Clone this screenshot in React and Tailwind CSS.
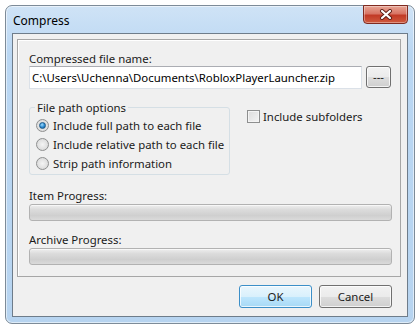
import React from "react";

function Radio({ checked, label }) {
  return (
    <div className="flex h-[19px] items-center whitespace-nowrap">
      <span
        className={
          "ml-[1px] flex h-[13px] w-[13px] shrink-0 items-center justify-center rounded-full border border-[#8e8f8f] " +
          "bg-[radial-gradient(circle_at_50%_50%,#f4f4f4_0%,#e0e0e0_60%,#cfcfcf_100%)]"
        }
      >
        {checked && (
          <span className="h-[7px] w-[7px] rounded-full border border-[#1d5a8a] bg-[radial-gradient(circle_at_40%_35%,#9fdcff_0%,#2b8ad0_55%,#0e4f8c_100%)]" />
        )}
      </span>
      <span className="ml-[4px] leading-[15px] text-[#1b1b1b]">{label}</span>
    </div>
  );
}

function ProgressBar() {
  return (
    <div className="mt-[1px] h-[17px] w-[363px] rounded-[3px] border border-[#b2b2b2] bg-[linear-gradient(to_bottom,#efefef_0%,#dcdcdc_30%,#cfcfcf_70%,#dadada_100%)] shadow-[inset_0_1px_0_#f7f7f7]" />
  );
}

function Button({ children, primary }) {
  return (
    <button
      type="button"
      className={
        "h-[23px] w-[73px] rounded-[3px] border leading-[15px] text-[#1b1b1b] shadow-[inset_0_0_0_1px_rgba(255,255,255,0.75)] " +
        (primary
          ? "border-[#3c8fc8] bg-[linear-gradient(to_bottom,#eaf6fd_0%,#d9f0fc_50%,#bee6fd_51%,#a7d9f5_100%)]"
          : "border-[#707070] bg-[linear-gradient(to_bottom,#f2f2f2_0%,#ebebeb_50%,#dddddd_51%,#cfcfcf_100%)]")
      }
    >
      {children}
    </button>
  );
}

export default function App() {
  return (
    <div className="h-[329px] w-[420px] bg-white p-[5px] font-['Noto_Sans','Open_Sans',sans-serif] text-[11.4px]">
      <div className="flex h-[319px] w-[410px] flex-col rounded-[7px] border border-[#7d8b98] bg-[linear-gradient(to_bottom,#cfe3f6_0%,#bad7f3_15%,#b7d4f0_100%)] shadow-[inset_0_0_0_1px_rgba(255,255,255,0.55)]">
        {/* title bar */}
        <div className="flex h-[27px] items-start pl-[7px] pr-[6px]">
          <span className="pt-[7px] text-[12px] leading-[15px] text-black">Compress</span>
          <div className="-mt-px ml-auto flex h-[19px] w-[45px] items-center justify-center rounded-b-[4px] border border-[#7f2a20] bg-[linear-gradient(to_bottom,#e8a594_0%,#d87464_45%,#c23a26_55%,#cf5a3e_100%)] shadow-[inset_0_0_0_1px_rgba(255,255,255,0.35)]">
            <svg width="14" height="11" viewBox="0 0 14 11">
              <path d="M3 2 L11 9 M11 2 L3 9" stroke="#5a1e16" strokeWidth="4" strokeLinecap="round" />
              <path d="M3 2 L11 9 M11 2 L3 9" stroke="#ffffff" strokeWidth="2.2" strokeLinecap="round" />
            </svg>
          </div>
        </div>

        {/* client area */}
        <div className="mx-[6px] flex h-[284px] flex-col border border-[#6e7c8a] bg-[#f0f0f0]">
          <div className="ml-[4px] mt-[5px] h-[238px] w-[384px] border border-[#a6a6a6] pl-[11px] shadow-[inset_1px_1px_0_#ffffff]">
            <div className="pt-[12px] leading-[14px] text-[#1b1b1b]">Compressed file name:</div>
            <div className="flex items-start">
              <div className="flex h-[23px] w-[333px] items-center whitespace-nowrap border border-[#dbe1e8] border-t-[#abadb3] bg-white pl-[2px] text-black">
                C:\Users\Uchenna\Documents\RobloxPlayerLauncher.zip
              </div>
              <button
                type="button"
                className="ml-[4px] flex h-[22px] w-[25px] items-center justify-center rounded-[3px] border border-[#707070] bg-[linear-gradient(to_bottom,#f2f2f2_0%,#ebebeb_50%,#dddddd_51%,#cfcfcf_100%)] leading-none text-[#1b1b1b] shadow-[inset_0_0_0_1px_rgba(255,255,255,0.75)]"
              >
                ---
              </button>
            </div>

            <div className="mt-[11px] flex items-start">
              <fieldset className="w-[201px] rounded-[3px] border border-[#d5dfe5] pb-[1px] pl-[5px] pt-[1px]">
                <legend className="px-[2px] leading-[15px] text-[#1b1b1b]">File path options</legend>
                <Radio checked label="Include full path to each file" />
                <Radio label="Include relative path to each file" />
                <Radio label="Strip path information" />
              </fieldset>
              <div className="ml-[17px] mt-[9px] flex h-[15px] items-center whitespace-nowrap">
                <span className="h-[13px] w-[13px] border border-[#8e8f8f] bg-[linear-gradient(135deg,#dcdcdc_0%,#f4f4f4_100%)] shadow-[inset_0_0_0_1px_#f4f4f4]" />
                <span className="ml-[3px] leading-[15px] text-[#1b1b1b]">Include subfolders</span>
              </div>
            </div>

            <div className="mt-[13px] leading-[15px] text-[#1b1b1b]">Item Progress:</div>
            <ProgressBar />
            <div className="mt-[11px] leading-[15px] text-[#1b1b1b]">Archive Progress:</div>
            <ProgressBar />
          </div>

          <div className="mt-[8px] flex justify-end gap-[7px] pr-[15px]">
            <Button primary>OK</Button>
            <Button>Cancel</Button>
          </div>
        </div>
      </div>
    </div>
  );
}
